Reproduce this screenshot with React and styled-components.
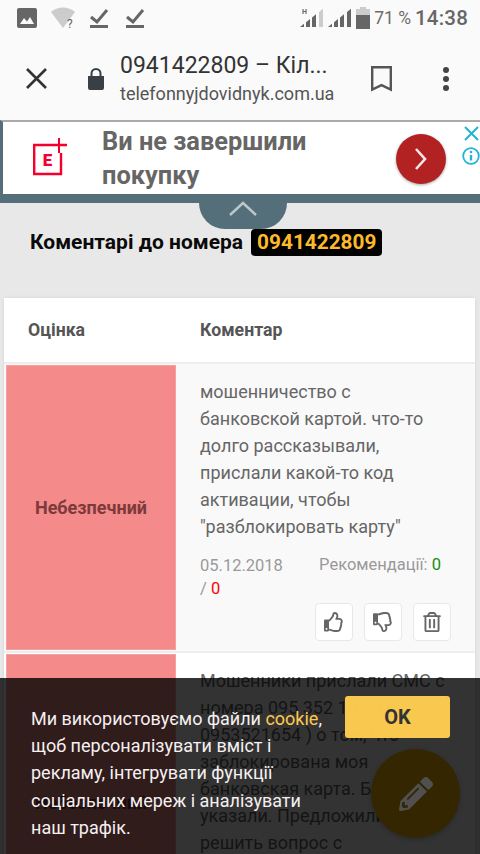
import React from 'react';
import styled, { createGlobalStyle } from 'styled-components';
import { FaPencilAlt, FaRegThumbsUp, FaRegThumbsDown, FaRegTrashAlt } from 'react-icons/fa';

const GlobalStyle = createGlobalStyle`
  html, body {
    margin: 0;
    padding: 0;
    background: #e8e8e8;
  }
  * {
    box-sizing: border-box;
  }
`;

const Screen = styled.div`
  position: relative;
  width: 480px;
  height: 854px;
  overflow: hidden;
  font-family: Roboto, "Noto Sans", sans-serif;
  background: #e8e8e8;
`;

const StatusBar = styled.div`
  height: 34px;
  padding: 6px 12px 0 17px;
  display: flex;
  align-items: flex-start;
  background: #fafafa;
`;

const StatusIcons = styled.div`
  display: flex;
  align-items: center;
  gap: 14px;
  height: 24px;
`;

const StatusRight = styled.div`
  margin-left: auto;
  display: flex;
  align-items: center;
  gap: 3px;
  height: 24px;
  color: #666;
`;

const Percent = styled.span`
  font-size: 17.5px;
  margin: 0 1px;
  color: #6b6b6b;
`;

const Clock = styled.span`
  font-size: 20.5px;
  font-weight: 500;
  letter-spacing: 0.2px;
  color: #666;
`;

const Toolbar = styled.div`
  height: 86px;
  display: flex;
  align-items: center;
  background: #fafafa;
  padding: 3px 31px 0 26px;
`;

const LockSlot = styled.div`
  margin-left: 41px;
  display: flex;
`;

const TitleBlock = styled.div`
  margin-left: 16px;
  display: flex;
  flex-direction: column;
`;

const PageTitle = styled.div`
  font-size: 23px;
  line-height: 30px;
  color: #333;
`;

const PageHost = styled.div`
  font-size: 18px;
  line-height: 25px;
  color: #555;
`;

const ToolbarIcons = styled.div`
  margin-left: auto;
  display: flex;
  align-items: center;
  gap: 51px;
`;

const AdBanner = styled.div`
  height: 83px;
  background: #546e7a;
  padding: 0 0 9px;
`;

const AdBody = styled.div`
  height: 74px;
  background: #fff;
  border-top: 2px solid #aaa;
  border-left: 3px solid #546e7a;
  display: flex;
  align-items: center;
  position: relative;
`;

const AdLogo = styled.div`
  width: 99px;
  padding: 0 0 2px 30px;
  display: flex;
  align-items: center;
`;

const AdText = styled.div`
  font-size: 25.4px;
  font-weight: 700;
  line-height: 34px;
  color: #666;
  width: 260px;
  margin-top: -1px;
`;

const AdButton = styled.div`
  position: absolute;
  left: 393px;
  top: 12px;
  width: 50px;
  height: 50px;
  border-radius: 50%;
  background: #b32222;
  box-shadow: 0 1px 3px rgba(0, 0, 0, 0.35);
  display: flex;
  align-items: center;
  justify-content: center;
`;

const AdMarks = styled.div`
  position: absolute;
  right: 0;
  top: 4px;
  width: 18px;
  display: flex;
  flex-direction: column;
  align-items: center;
  gap: 6px;
`;

const CollapseTab = styled.div`
  position: absolute;
  left: 199px;
  top: 203px;
  width: 88px;
  height: 26px;
  background: #546e7a;
  border-radius: 0 0 44px 44px;
  display: flex;
  justify-content: center;
`;

const TabChevron = styled.svg`
  margin-top: -3px;
`;

const Content = styled.div`
  padding: 0 5px 0 4px;
`;

const Heading = styled.div`
  height: 95px;
  padding: 26px 0 0 26px;
  display: flex;
  align-items: flex-start;
  font-size: 21px;
  font-weight: 700;
  line-height: 27px;
  color: #0a0a0a;
`;

const PhoneBadge = styled.span`
  margin-left: 8px;
  background: #000;
  color: #fdb92c;
  border-radius: 4px;
  padding: 0 6px;
  font-size: 20.8px;
`;

const Table = styled.div`
  background: #fff;
  box-shadow: 0 0 4px rgba(0, 0, 0, 0.08);
`;

const HeaderRow = styled.div`
  height: 66px;
  display: flex;
  align-items: center;
  font-size: 17.7px;
  font-weight: 700;
  color: #555;
  border-bottom: 2px solid #eee;
`;

const ScoreHead = styled.div`
  width: 196px;
  padding-left: 24px;
`;

const Row = styled.div`
  display: flex;
  padding: 1px 0 1px 2px;
  background: ${(p) => (p.$shaded ? '#f9f9f9' : '#fff')};
  border-bottom: 2px solid #eee;
  height: ${(p) => p.$height}px;
`;

const Score = styled.div`
  width: 170px;
  flex: none;
  background: #f48a8a;
  border: 1px solid #f6a0a0;
  display: flex;
  align-items: center;
  justify-content: center;
  font-size: 18px;
  font-weight: 700;
  color: #7d3a3a;
`;

const CommentCell = styled.div`
  flex: 1;
  padding: 13px 24px 0 24px;
`;

const CommentText = styled.div`
  font-size: 18px;
  line-height: 27px;
  color: #666;
`;

const MetaRow = styled.div`
  display: flex;
  justify-content: space-between;
  margin-top: 14px;
  font-size: 16.500px;
  line-height: 23px;
  color: #999;
`;

const MetaDate = styled.div`
  width: 90px;
`;

const MetaVotes = styled.div`
  margin-right: 10px;
  margin-top: -1px;
`;

const Up = styled.span`
  color: #178a17;
`;

const Down = styled.span`
  color: #f00;
`;

const Actions = styled.div`
  display: flex;
  justify-content: flex-end;
  gap: 11px;
  margin-top: 3px;
`;

const ActionButton = styled.div`
  width: 38px;
  height: 38px;
  background: #fff;
  border: 1px solid #e8e8e8;
  border-radius: 4px;
  display: flex;
  align-items: center;
  justify-content: center;
  color: #666;
  font-size: 20px;
`;

const CookieBar = styled.div`
  position: absolute;
  left: 0;
  right: 0;
  top: 678px;
  bottom: 0;
  background: rgba(0, 0, 0, 0.8);
  padding: 18px 30px 0 31px;
  display: flex;
  align-items: flex-start;
  justify-content: space-between;
`;

const CookieText = styled.div`
  width: 300px;
  margin-top: 9px;
  font-size: 18px;
  line-height: 27.2px;
  color: #f6f0f0;
`;

const CookieLink = styled.span`
  color: #ffc94f;
`;

const OkButton = styled.div`
  width: 105px;
  height: 42px;
  background: #ffcd50;
  opacity: 0.97;
  border-radius: 3px;
  display: flex;
  align-items: center;
  justify-content: center;
  font-size: 20px;
  font-weight: 700;
  color: #333;
`;

const Fab = styled.div`
  position: absolute;
  left: 371px;
  top: 749px;
  width: 89px;
  height: 89px;
  border-radius: 50%;
  background: #332600;
  box-shadow: 0 2px 5px rgba(0, 0, 0, 0.2);
  display: flex;
  align-items: center;
  justify-content: center;
  color: #505050;
  font-size: 34px;
`;

const PictureIcon = () => (
  <svg width="20" height="20" viewBox="0 0 20 20">
    <rect width="20" height="20" rx="2" fill="#666" />
    <path d="M3 16l4-6 3 3.500 3-4.500 4 7z" fill="#fafafa" />
  </svg>
);

const WifiIcon = () => (
  <svg width="25" height="22" viewBox="0 0 25 22">
    <path d="M0 5C6-1 18-1 24 5L12 21z" fill="#ccc" />
    <text x="16" y="21" fontSize="12" fontFamily="Roboto" fill="#666">?</text>
  </svg>
);

const CheckTray = () => (
  <svg width="22" height="22" viewBox="0 0 22 22">
    <path d="M1 10l6 5L17 3" fill="none" stroke="#666" strokeWidth="3" />
    <rect y="18" width="18" height="3" fill="#666" />
  </svg>
);

const SignalIcon = ({ $weak, $label }) => (
  <svg width="25" height="20" viewBox="0 0 25 20">
    <path d="M0 19l4-3.200V19z" fill="#666" />
    <path d="M6 14.250l4-3.250V19H6z" fill="#666" />
    <path d="M12 9.500l4-3.200V19h-4z" fill="#666" />
    <path d="M19 4l4-3.200V19h-4z" fill={$weak ? '#ccc' : '#666'} />
    {$label && <text x="2" y="6" fontSize="7" fontWeight="700" fontFamily="Roboto" fill="#666">H</text>}
  </svg>
);

const BatteryIcon = () => (
  <svg width="14" height="22" viewBox="0 0 14 22">
    <path d="M4 0h6v2h4v20H0V2h4z" fill="#ccc" />
    <rect y="8" width="14" height="14" fill="#666" />
  </svg>
);

const CloseIcon = () => (
  <svg width="21" height="21" viewBox="0 0 21 21">
    <path d="M1 1l19 19M20 1L1 20" stroke="#333" strokeWidth="2.600" />
  </svg>
);

const LockIcon = () => (
  <svg width="16" height="22" viewBox="0 0 16 22">
    <path d="M0 8h16v12a2 2 0 0 1-2 2H2a2 2 0 0 1-2-2z" fill="#3a3f45" />
    <path d="M3.500 9V5.500a4.500 4.500 0 0 1 9 0V9" fill="none" stroke="#3a3f45" strokeWidth="2" />
  </svg>
);

const BookmarkIcon = () => (
  <svg width="21" height="26" viewBox="0 0 21 26">
    <path d="M1.200 1.200h18.600v22.500l-9.300-4.500-9.300 4.500z" fill="none" stroke="#555" strokeWidth="2.400" />
  </svg>
);

const MenuIcon = () => (
  <svg width="6" height="24" viewBox="0 0 6 24">
    <circle cx="3" cy="3" r="3" fill="#444" />
    <circle cx="3" cy="12" r="3" fill="#444" />
    <circle cx="3" cy="21" r="3" fill="#444" />
  </svg>
);

const BrandLogo = () => (
  <svg width="36" height="38" viewBox="0 0 36 38">
    <path d="M34 7H1.200v29h26.800V15" fill="none" stroke="#f5002c" strokeWidth="2.400" />
    <path d="M26 0v15" fill="none" stroke="#f5002c" strokeWidth="2" />
    <text x="14.500" y="28" fontSize="17" fontWeight="900" fontFamily="Roboto" fill="#f5002c" textAnchor="middle">E</text>
  </svg>
);

const ChevronRight = () => (
  <svg width="14" height="24" viewBox="0 0 14 24">
    <path d="M2 2l9 10-9 10" fill="none" stroke="#f7e7e7" strokeWidth="2.600" />
  </svg>
);

const AdClose = () => (
  <svg width="15" height="15" viewBox="0 0 15 15">
    <path d="M1 1l13 13M14 1L1 14" stroke="#22b3d6" strokeWidth="2" />
  </svg>
);

const AdInfo = () => (
  <svg width="18" height="18" viewBox="0 0 18 18">
    <circle cx="9" cy="9" r="7.800" fill="none" stroke="#22b3d6" strokeWidth="1.800" />
    <path d="M9 8v5.500" stroke="#22b3d6" strokeWidth="2.400" />
    <circle cx="9" cy="5" r="1.300" fill="#22b3d6" />
  </svg>
);

const ChevronUp = () => (
  <TabChevron width="30" height="18" viewBox="0 0 30 18">
    <path d="M2 15L15 3l13 12" fill="none" stroke="#bcc7cc" strokeWidth="2.400" />
  </TabChevron>
);

function App() {
  return (
    <Screen>
      <GlobalStyle />
      <StatusBar>
        <StatusIcons>
          <PictureIcon />
          <WifiIcon />
          <CheckTray />
          <CheckTray />
        </StatusIcons>
        <StatusRight>
          <SignalIcon $weak $label />
          <SignalIcon />
          <BatteryIcon />
          <Percent>71 %</Percent>
          <Clock>14:38</Clock>
        </StatusRight>
      </StatusBar>

      <Toolbar>
        <CloseIcon />
        <LockSlot>
          <LockIcon />
        </LockSlot>
        <TitleBlock>
          <PageTitle>0941422809 – Кіл...</PageTitle>
          <PageHost>telefonnyjdovidnyk.com.ua</PageHost>
        </TitleBlock>
        <ToolbarIcons>
          <BookmarkIcon />
          <MenuIcon />
        </ToolbarIcons>
      </Toolbar>

      <AdBanner>
        <AdBody>
          <AdLogo>
            <BrandLogo />
          </AdLogo>
          <AdText>Ви не завершили покупку</AdText>
          <AdButton>
            <ChevronRight />
          </AdButton>
          <AdMarks>
            <AdClose />
            <AdInfo />
          </AdMarks>
        </AdBody>
      </AdBanner>
      <CollapseTab>
        <ChevronUp />
      </CollapseTab>

      <Content>
        <Heading>
          Коментарі до номера
          <PhoneBadge>0941422809</PhoneBadge>
        </Heading>
        <Table>
          <HeaderRow>
            <ScoreHead>Оцінка</ScoreHead>
            <div>Коментар</div>
          </HeaderRow>
          <Row $shaded $height={289}>
            <Score>Небезпечний</Score>
            <CommentCell>
              <CommentText>
                мошенничество с банковской картой. что-то долго рассказывали, прислали какой-то код
                активации, чтобы "разблокировать карту"
              </CommentText>
              <MetaRow>
                <MetaDate>
                  05.12.2018 / <Down>0</Down>
                </MetaDate>
                <MetaVotes>
                  Рекомендації: <Up>0</Up>
                </MetaVotes>
              </MetaRow>
              <Actions>
                <ActionButton>
                  <FaRegThumbsUp />
                </ActionButton>
                <ActionButton>
                  <FaRegThumbsDown />
                </ActionButton>
                <ActionButton>
                  <FaRegTrashAlt />
                </ActionButton>
              </Actions>
            </CommentCell>
          </Row>
          <Row $height={300}>
            <Score>Небезпечний</Score>
            <CommentCell>
              <CommentText>
                Мошенники прислали СМС с номера 095 352 16 34 ( 0953521654 ) о том, что заблокирована
                моя банковская карта. Банк не указали. Предложили решить вопрос с
              </CommentText>
            </CommentCell>
          </Row>
        </Table>
      </Content>

      <CookieBar>
        <CookieText>
          Ми використовуємо файли <CookieLink>cookie</CookieLink>, щоб персоналізувати вміст і
          рекламу, інтегрувати функції соціальних мереж і аналізувати наш трафік.
        </CookieText>
        <OkButton>OK</OkButton>
      </CookieBar>

      <Fab>
        <FaPencilAlt />
      </Fab>
    </Screen>
  );
}

export default App;
